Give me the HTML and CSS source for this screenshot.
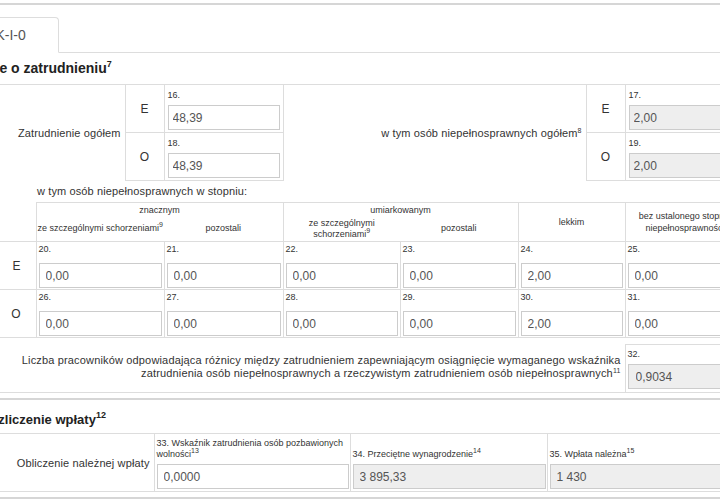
FILE: index.html
```html
<!DOCTYPE html>
<html lang="pl">
<head>
<meta charset="utf-8">
<title>DEK-I-0</title>
<link rel="stylesheet" href="styles.css">
</head>
<body>
<div class="page">
  <div class="sep sep-top"></div>

  <ul class="tabs">
    <li class="tab">DEK-I-0</li>
  </ul>

  <h3 class="heading heading-1">Dane o zatrudnieniu<sup>7</sup></h3>

  <table class="grid t1">
    <colgroup>
      <col class="w165"><col class="w39"><col class="w119"><col class="w303"><col class="w39"><col class="w120">
    </colgroup>
    <tr>
      <td rowspan="2" class="lab lab-top">Zatrudnienie ogółem</td>
      <td class="eo b">E</td>
      <td class="fld b"><div class="num">16.</div><input class="inp" type="text" value="48,39" readonly></td>
      <td rowspan="2" class="lab lab-top">w tym osób niepełnosprawnych ogółem<sup>8</sup></td>
      <td class="eo b">E</td>
      <td class="fld b"><div class="num">17.</div><input class="inp ro" type="text" value="2,00" readonly></td>
    </tr>
    <tr>
      <td class="eo b">O</td>
      <td class="fld b"><div class="num">18.</div><input class="inp" type="text" value="48,39" readonly></td>
      <td class="eo b">O</td>
      <td class="fld b"><div class="num">19.</div><input class="inp ro" type="text" value="2,00" readonly></td>
    </tr>
  </table>

  <div class="subtitle">w tym osób niepełnosprawnych w stopniu:</div>

  <table class="grid t2">
    <colgroup>
      <col class="w76"><col class="w128"><col class="w119"><col class="w117"><col class="w118"><col class="w107"><col class="w120">
    </colgroup>
    <tr class="hr1">
      <td rowspan="2" class="blank"></td>
      <td colspan="2" class="hd grp">znacznym</td>
      <td colspan="2" class="hd grp">umiarkowanym</td>
      <td rowspan="2" class="hd grp mid">lekkim</td>
      <td rowspan="2" class="hd grp mid two">bez ustalonego stopnia<br>niepełnosprawności</td>
    </tr>
    <tr class="hr2">
      <td class="hd bl nowrap">ze szczególnymi schorzeniami<sup>9</sup></td>
      <td class="hd br">pozostali</td>
      <td class="hd bl two">ze szczególnymi<br>schorzeniami<sup>9</sup></td>
      <td class="hd br">pozostali</td>
    </tr>
    <tr>
      <td class="rl">E</td>
      <td class="fld2 b"><div class="num">20.</div><input class="inp" type="text" value="0,00" readonly></td>
      <td class="fld2 b"><div class="num">21.</div><input class="inp" type="text" value="0,00" readonly></td>
      <td class="fld2 b"><div class="num">22.</div><input class="inp" type="text" value="0,00" readonly></td>
      <td class="fld2 b"><div class="num">23.</div><input class="inp" type="text" value="0,00" readonly></td>
      <td class="fld2 b"><div class="num">24.</div><input class="inp" type="text" value="2,00" readonly></td>
      <td class="fld2 b"><div class="num">25.</div><input class="inp" type="text" value="0,00" readonly></td>
    </tr>
    <tr>
      <td class="rl">O</td>
      <td class="fld2 b"><div class="num">26.</div><input class="inp" type="text" value="0,00" readonly></td>
      <td class="fld2 b"><div class="num">27.</div><input class="inp" type="text" value="0,00" readonly></td>
      <td class="fld2 b"><div class="num">28.</div><input class="inp" type="text" value="0,00" readonly></td>
      <td class="fld2 b"><div class="num">29.</div><input class="inp" type="text" value="0,00" readonly></td>
      <td class="fld2 b"><div class="num">30.</div><input class="inp" type="text" value="2,00" readonly></td>
      <td class="fld2 b"><div class="num">31.</div><input class="inp" type="text" value="0,00" readonly></td>
    </tr>
  </table>

  <table class="grid t3">
    <colgroup><col class="w665"><col class="w120"></colgroup>
    <tr>
      <td class="lab lab-bottom long">Liczba pracowników odpowiadająca różnicy między zatrudnieniem zapewniającym osiągnięcie wymaganego wskaźnika<br>zatrudnienia osób niepełnosprawnych a rzeczywistym zatrudnieniem osób niepełnosprawnych<sup>11</sup></td>
      <td class="fld3 b"><div class="num">32.</div><input class="inp ro" type="text" value="0,9034" readonly></td>
    </tr>
  </table>

  <div class="sep sep-mid"></div>

  <h3 class="heading heading-2">Rozliczenie wpłaty<sup>12</sup></h3>

  <table class="grid t4">
    <colgroup><col class="w194"><col class="w196"><col class="w197"><col class="w198"></colgroup>
    <tr>
      <td class="lab lab-tb">Obliczenie należnej wpłaty</td>
      <td class="fld4 b"><div class="num4">33. Wskaźnik zatrudnienia osób pozbawionych<br>wolności<sup>13</sup></div><input class="inp" type="text" value="0,0000" readonly></td>
      <td class="fld4 b"><div class="num4">34. Przeciętne wynagrodzenie<sup>14</sup></div><input class="inp ro" type="text" value="3 895,33" readonly></td>
      <td class="fld4 b"><div class="num4">35. Wpłata należna<sup>15</sup></div><input class="inp ro" type="text" value="1 430" readonly></td>
    </tr>
  </table>

  <div class="sep sep-bottom"></div>
</div>
</body>
</html>
```

FILE: styles.css
```css
* { box-sizing: border-box; }

html, body {
  margin: 0;
  padding: 0;
  background: #fff;
}

body {
  width: 720px;
  height: 500px;
  overflow: hidden;
  font-family: "Liberation Sans", Arial, sans-serif;
  font-size: 11px;
  color: #333;
}

.page {
  width: 785px;
  margin-left: -40px;
}

sup {
  font-size: 7px;
  line-height: 0;
  vertical-align: 4px;
}

/* separators */
.sep { height: 2px; background: #d6d6d6; }
.sep-top { margin-top: 3px; }
.sep-mid { margin-top: 5px; }
.sep-bottom { margin-top: 5px; }

/* tabs */
.tabs {
  list-style: none;
  margin: 12px 0 0;
  padding: 0;
  display: flex;
  border-bottom: 1px solid #ddd;
}
.tab {
  width: 99px;
  height: 36px;
  margin-bottom: -1px;
  padding-left: 15px;
  border: 1px solid #ddd;
  border-bottom-color: transparent;
  border-radius: 4px 4px 0 0;
  background: #fff;
  font-size: 14px;
  line-height: 34px;
  color: #555;
}

/* headings */
.heading {
  margin: 0;
  font-weight: bold;
  color: #222;
  line-height: 20px;
}
.heading sup { font-size: 9px; vertical-align: 6px; }
.heading-1 {
  font-size: 14px;
  padding: 5px 0 6px 13px;
}
.heading-2 {
  font-size: 13px;
  padding: 10px 0 3px 21px;
}

/* tables */
.grid {
  width: 785px;
  border-collapse: collapse;
  table-layout: fixed;
}
.grid td { padding: 0; }

.w39 { width: 39px; }
.w76 { width: 76px; }
.w107 { width: 107px; }
.w117 { width: 117px; }
.w118 { width: 118px; }
.w119 { width: 119px; }
.w120 { width: 120px; }
.w128 { width: 128px; }
.w165 { width: 165px; }
.w194 { width: 194px; }
.w196 { width: 196px; }
.w197 { width: 197px; }
.w198 { width: 198px; }
.w303 { width: 303px; }
.w665 { width: 665px; }

.grid td.b { border: 1px solid #ddd; }

.lab {
  text-align: right;
  vertical-align: middle;
  padding-right: 4px !important;
  font-size: 11px;
  letter-spacing: 0.12px;
  color: #333;
}
.lab-top { border-top: 1px solid #ddd; }
.lab-bottom { border-bottom: 1px solid #ddd; }
.lab-tb { border-top: 1px solid #ddd; border-bottom: 1px solid #ddd; }
.long { line-height: 13px; letter-spacing: 0.16px; padding-bottom: 3px !important; }

.eo {
  text-align: center;
  vertical-align: middle;
  font-size: 12px;
  color: #333;
}

.num {
  font-size: 9px;
  line-height: 12px;
  color: #333;
  white-space: nowrap;
}

.inp {
  display: block;
  width: 100%;
  height: 25px;
  margin: 4px 0 0;
  padding: 0 4px;
  border: 1px solid #ccc;
  background: #fff;
  font-family: "Liberation Sans", Arial, sans-serif;
  font-size: 12px;
  color: #555;
  outline: none;
}
.inp.ro { background: #eee; }

.fld { padding: 4px 3px 2px 3px !important; vertical-align: top; }

/* table 2 */
.subtitle {
  height: 21px;
  line-height: 21px;
  padding-left: 77px;
  font-size: 11px;
  letter-spacing: 0.12px;
  color: #333;
}

.hd {
  text-align: center;
  font-size: 9px;
  color: #333;
}
.hr1 .hd { height: 14px; line-height: 12px; padding-top: 1px !important; vertical-align: top; }
.hr1 .hd.mid { vertical-align: middle; padding-top: 0 !important; }
.hd.grp { border: 1px solid #ddd; border-bottom: none; }
.hr1 .hd.mid { border-bottom: 1px solid #ddd; }
.hr2 .hd { height: 25px; line-height: 11px; vertical-align: middle; border-bottom: 1px solid #ddd; }
.hd.two { line-height: 12px; }
.hr2 .hd.two { line-height: 11px; }
.hd.bl { border-left: 1px solid #ddd; }
.hd.br { border-right: 1px solid #ddd; }
.nowrap { white-space: nowrap; }

.rl {
  text-align: right;
  vertical-align: middle;
  padding-right: 15px !important;
  font-size: 12px;
  border-top: 1px solid #ddd;
  border-bottom: 1px solid #ddd;
}

.fld2 { padding: 1px 2px 1px 2px !important; vertical-align: top; }
.fld2 .inp { margin-top: 8px; padding-left: 6px; }

/* table 3 */
.t3 { margin-top: 6px; }
.fld3 { padding: 3px 2px 3px 2px !important; vertical-align: top; }
.fld3 .inp { padding-left: 7px; }

/* table 4 */
.t4 td { height: 58px; }
.fld4 { padding: 2px 1px 2px 2px !important; vertical-align: bottom; }
.num4 {
  font-size: 9px;
  line-height: 11px;
  color: #333;
  white-space: nowrap;
}
.fld4 .inp { padding-left: 6px; }
```
